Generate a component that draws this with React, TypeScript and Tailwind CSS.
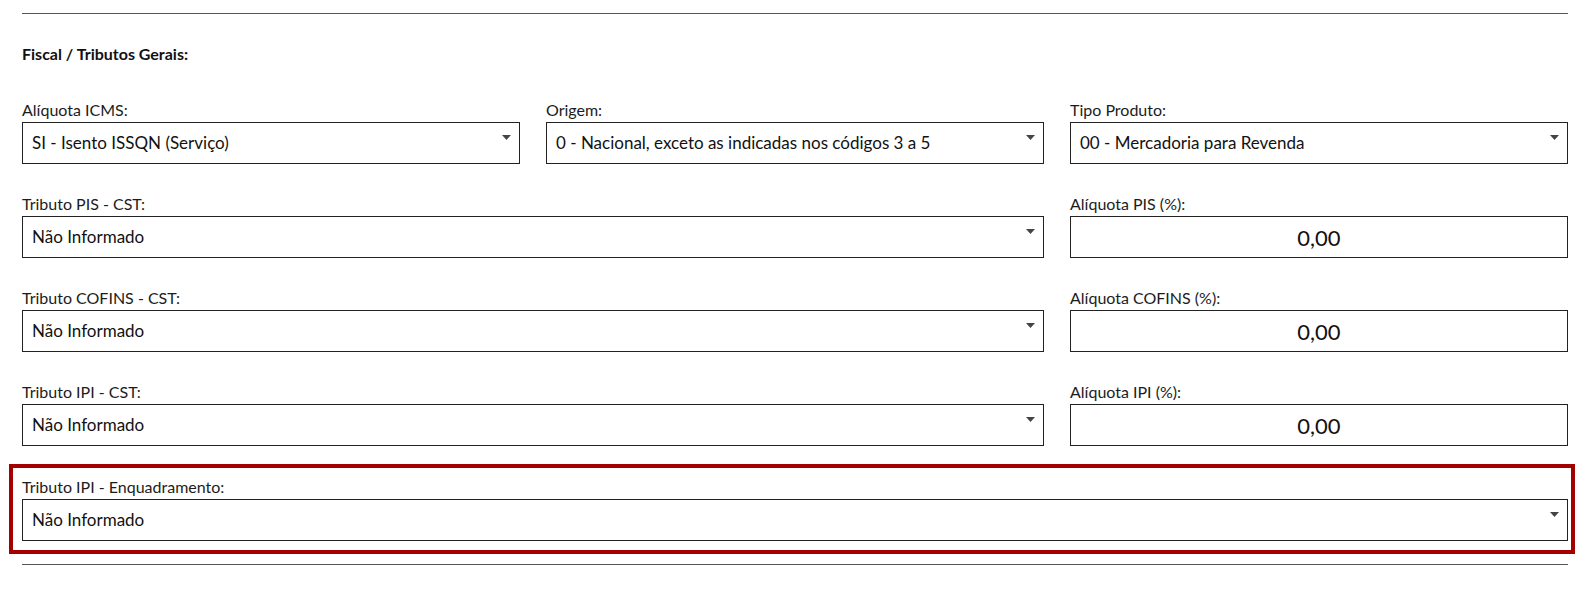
import React from "react";

const font = { fontFamily: "Lato, 'Open Sans', sans-serif" };

function Arrow() {
  return (
    <svg width="9" height="5" viewBox="0 0 9 5" className="absolute right-[8px] top-[12px]">
      <path d="M0 0 L9 0 L4.5 5 Z" fill="#444" />
    </svg>
  );
}

function Select({ label, value }: { label: string; value: string }) {
  return (
    <div className="flex flex-col">
      <div className="h-[20px] leading-[20px] text-[16px] text-[#1c1c1c] mb-[2px]">{label}</div>
      <div className="relative h-[42px] border border-[#222] bg-white flex items-center pl-[9px] text-[17px] text-[#111]">
        {value}
        <Arrow />
      </div>
    </div>
  );
}

function Num({ label, value }: { label: string; value: string }) {
  return (
    <div className="flex flex-col">
      <div className="h-[20px] leading-[20px] text-[16px] text-[#1c1c1c] mb-[2px]">{label}</div>
      <div className="h-[42px] border border-[#222] bg-white flex items-center justify-center text-[22px] text-[#111]">
        {value}
      </div>
    </div>
  );
}

export default function App() {
  return (
    <div className="w-[1586px] h-[595px] bg-white pl-[22px] pr-[18px] pt-[13px]" style={font}>
      <div className="h-px bg-[#555]" />
      <div className="mt-[30px] h-[20px] leading-[20px] text-[16px] font-bold text-[#111]">
        Fiscal / Tributos Gerais:
      </div>
      <div className="mt-[36px] grid grid-cols-3 gap-x-[26px] gap-y-[30px]">
        <Select label="Alíquota ICMS:" value="SI - Isento ISSQN (Serviço)" />
        <Select label="Origem:" value="0 - Nacional, exceto as indicadas nos códigos 3 a 5" />
        <Select label="Tipo Produto:" value="00 - Mercadoria para Revenda" />
        <div className="col-span-2">
          <Select label="Tributo PIS - CST:" value="Não Informado" />
        </div>
        <Num label="Alíquota PIS (%):" value="0,00" />
        <div className="col-span-2">
          <Select label="Tributo COFINS - CST:" value="Não Informado" />
        </div>
        <Num label="Alíquota COFINS (%):" value="0,00" />
        <div className="col-span-2">
          <Select label="Tributo IPI - CST:" value="Não Informado" />
        </div>
        <Num label="Alíquota IPI (%):" value="0,00" />
      </div>
      <div className="mt-[18px] ml-[-13px] mr-[-7px] border-[4px] border-[#a30000] pl-[9px] pr-[3px] pt-[9px] pb-[9px]">
        <Select label="Tributo IPI - Enquadramento:" value="Não Informado" />
      </div>
      <div className="mt-[10px] h-px bg-[#555]" />
    </div>
  );
}
